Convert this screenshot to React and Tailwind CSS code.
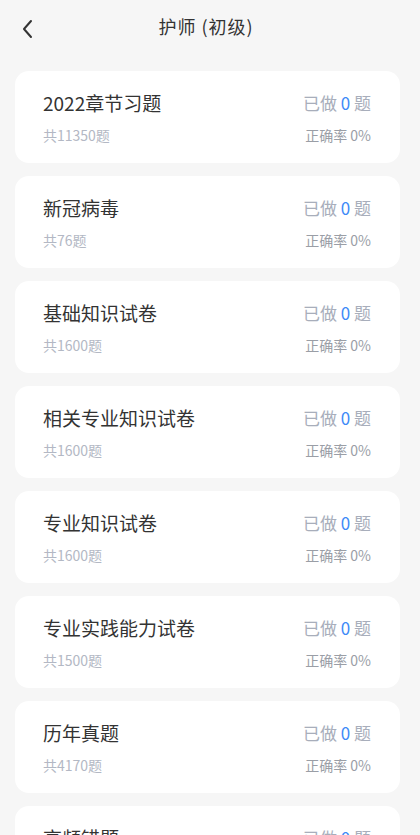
import React from 'react'

const items = [
  { name: '2022章节习题', total: 11350 },
  { name: '新冠病毒', total: 76 },
  { name: '基础知识试卷', total: 1600 },
  { name: '相关专业知识试卷', total: 1600 },
  { name: '专业知识试卷', total: 1600 },
  { name: '专业实践能力试卷', total: 1500 },
  { name: '历年真题', total: 4170 },
  { name: '高频错题', total: 2000 },
]

function Card({ name, total }) {
  return (
    <div className="bg-white rounded-[14px] pl-[28px] pr-[29px] pt-[19px] pb-[19px] flex justify-between">
      <div className="flex flex-col gap-[10px]">
        <div className="text-[19px] leading-[26px] text-[#333]">{name}</div>
        <div className="text-[14px] leading-[18px] text-[#b3b8c4]">共{total}题</div>
      </div>
      <div className="flex flex-col items-end gap-[10px]">
        <div className="text-[17px] leading-[26px] text-[#a8aebb]">
          已做 <span className="text-[#3d8af7]">0</span> 题
        </div>
        <div className="text-[14px] leading-[18px] text-[#9a9ea6]">正确率 0%</div>
      </div>
    </div>
  )
}

export default function App() {
  return (
    <div
      className="min-h-screen h-[835px] overflow-hidden bg-[#f6f6f6]"
      style={{ fontFamily: '"Noto Sans CJK SC", "Noto Sans", sans-serif' }}
    >
      <header className="h-[55px] flex items-center relative">
        <button className="absolute left-[16px] top-[14px] p-1">
          <svg width="16" height="22" viewBox="0 0 16 22" fill="none">
            <path d="M11 3 L4 11 L11 19" stroke="#333" strokeWidth="2" strokeLinecap="round" strokeLinejoin="round" />
          </svg>
        </button>
        <h1 className="flex-1 text-center text-[18px] text-[#333] pb-[2px] pr-[8px] tracking-[1px]">护师 (初级)</h1>
      </header>
      <main className="pl-[15px] pr-[20px] pt-[16px] flex flex-col gap-[13px]">
        {items.map((it) => (
          <Card key={it.name} {...it} />
        ))}
      </main>
    </div>
  )
}
